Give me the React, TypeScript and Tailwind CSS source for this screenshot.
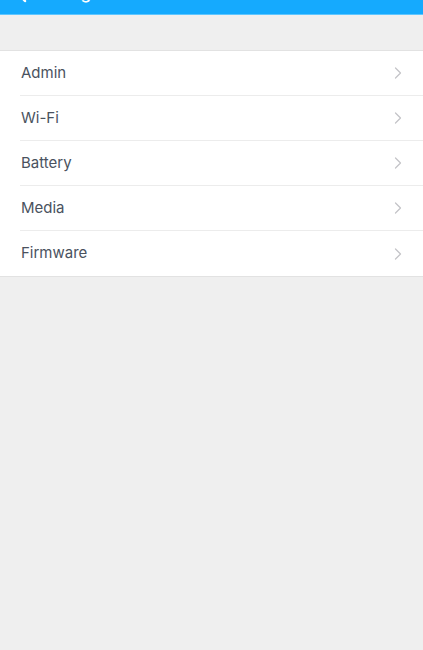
import { ChevronRight } from 'lucide-react';

const items = ['Admin', 'Wi-Fi', 'Battery', 'Media', 'Firmware'];

export default function App() {
  return (
    <div className="min-h-screen overflow-hidden bg-[#efefef] font-['Inter',sans-serif]">
      {/* header, mostly scrolled off the top */}
      <div className="mt-[-49px] h-[64px] bg-[#15aafe] border-b border-[#5ec6ff] flex items-end pb-[10px] px-[14px] text-white">
        <svg width="14" height="22" viewBox="0 0 14 22" className="mb-[1px]">
          <path d="M11 2 L3 11 L11 20" fill="none" stroke="white" strokeWidth="2.5" strokeLinecap="round" strokeLinejoin="round" />
        </svg>
        <span className="ml-[6px] text-[17px] leading-[22px] font-medium">Settings</span>
      </div>

      <div className="h-[35px]" />

      <div className="bg-white border-y border-[#e2e2e2]">
        {items.map((item, i) => (
          <div key={item} className="pl-[20px]">
            <div className={`flex items-center h-[45px] pr-[15px] ${i < items.length - 1 ? 'border-b border-[#ececec]' : ''}`}>
              <span className="flex-1 pl-[1px] text-[15px] text-[#4a525e]">{item}</span>
              <ChevronRight className="w-[20px] h-[20px] text-[#c4c4c8]" strokeWidth={1.5} />
            </div>
          </div>
        ))}
      </div>
    </div>
  );
}
